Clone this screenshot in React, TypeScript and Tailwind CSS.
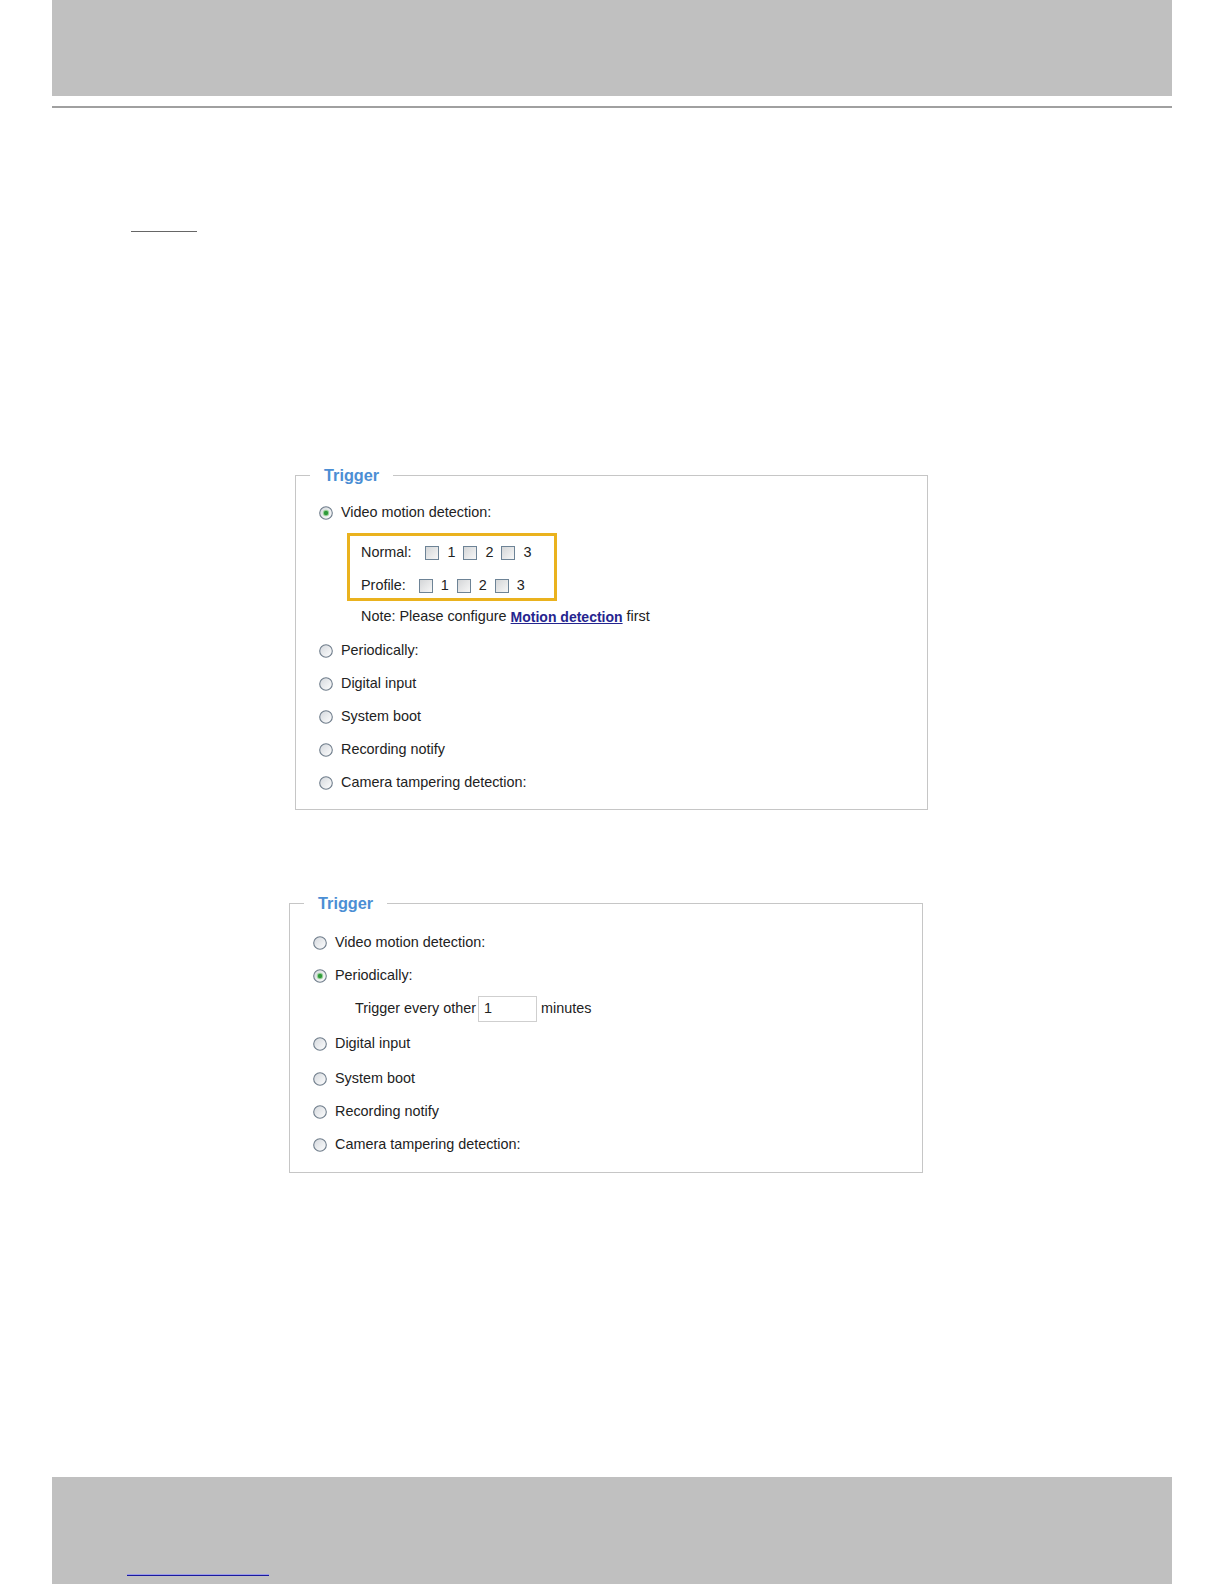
import type { ReactNode } from "react";

const font = { fontFamily: '"Liberation Sans", Arial, sans-serif' };

function Radio({ checked = false }: { checked?: boolean }) {
  return (
    <svg width="14" height="14" viewBox="0 0 14 14" className="shrink-0">
      <defs>
        <linearGradient id={checked ? "rg-on" : "rg-off"} x1="0" y1="0" x2="1" y2="1">
          <stop offset="0" stopColor="#d3d7dc" />
          <stop offset="1" stopColor="#ffffff" />
        </linearGradient>
      </defs>
      <circle
        cx="7"
        cy="7"
        r="6.3"
        fill={`url(#${checked ? "rg-on" : "rg-off"})`}
        stroke="#6f7d8b"
        strokeWidth="1.1"
      />
      {checked && (
        <>
          <circle cx="7" cy="7" r="3.2" fill="#9fd49f" />
          <circle cx="7" cy="7" r="2.2" fill="#2f9a3a" />
        </>
      )}
    </svg>
  );
}

function Checkbox() {
  return (
    <span className="inline-block h-[14px] w-[14px] shrink-0 border border-[#6d8396] bg-gradient-to-br from-[#d4d6d8] to-[#f7f7f7]" />
  );
}

function RadioRow({
  label,
  checked,
  h,
}: {
  label: string;
  checked?: boolean;
  h: string;
}) {
  return (
    <div className={`flex items-center gap-[8px] ${h}`}>
      <Radio checked={checked} />
      <span>{label}</span>
    </div>
  );
}

function Panel({
  className,
  children,
}: {
  className: string;
  children: ReactNode;
}) {
  return (
    <fieldset className={`block border border-[#c6c6c6] ${className}`}>
      <legend className="ml-[14px] px-[14px] text-[16.3px] font-bold leading-[20px] text-[#4b8ed4]">
        Trigger
      </legend>
      {children}
    </fieldset>
  );
}

function CheckGroup({ label, gap }: { label: string; gap: string }) {
  return (
    <div className="flex h-[18px] items-center">
      <span className={gap}>{label}</span>
      {[1, 2, 3].map((n) => (
        <span key={n} className="flex items-center">
          <Checkbox />
          <span className="ml-[8px] mr-[8px]">{n}</span>
        </span>
      ))}
    </div>
  );
}

export default function App() {
  return (
    <div
      className="relative h-[1584px] w-[1224px] overflow-hidden bg-white text-[14.4px] text-[#222]"
      style={font}
    >
      <div className="mx-[52px] h-[96px] bg-[#c0c0c0]" />
      <div className="mx-[52px] mt-[10px] h-[2px] bg-[#a0a0a0]" />

      <div className="ml-[131px] mt-[123px] h-px w-[66px] bg-[#666]" />

      <Panel className="ml-[295px] mt-[233px] w-[633px] pb-[10px]">
        <div className="pl-[23px] pt-[11px]">
          <RadioRow label="Video motion detection:" checked h="h-[33px]" />
          <div className="ml-[28px] mt-[4px] flex h-[68px] w-[210px] flex-col gap-[15px] border-[3px] border-[#eab21e] pl-[11px] pt-[8px]">
            <CheckGroup label="Normal:" gap="mr-[14px]" />
            <CheckGroup label="Profile:" gap="mr-[13px]" />
          </div>
          <div className="ml-[42px] mt-[7px] flex h-[18px] items-center">
            Note: Please configure&nbsp;
            <a href="#" className="text-[14px] font-bold text-[#25258f] underline">
              Motion detection
            </a>
            &nbsp;first
          </div>
          <div className="mt-[8px]">
            <RadioRow label="Periodically:" h="h-[33px]" />
            <RadioRow label="Digital input" h="h-[33px]" />
            <RadioRow label="System boot" h="h-[33px]" />
            <RadioRow label="Recording notify" h="h-[33px]" />
            <RadioRow label="Camera tampering detection:" h="h-[33px]" />
          </div>
        </div>
      </Panel>

      <Panel className="ml-[289px] mt-[83px] w-[634px] pb-[10px]">
        <div className="pl-[23px] pt-[13px]">
          <RadioRow label="Video motion detection:" h="h-[33px]" />
          <RadioRow label="Periodically:" checked h="h-[33px]" />
          <div className="ml-[42px] flex h-[34px] items-center">
            <span>Trigger every other</span>
            <span className="ml-[2px] flex h-[26px] w-[59px] items-center border border-[#cfcfcf] pl-[5px]">
              1
            </span>
            <span className="ml-[4px]">minutes</span>
          </div>
          <RadioRow label="Digital input" h="h-[35.5px]" />
          <RadioRow label="System boot" h="h-[34px]" />
          <RadioRow label="Recording notify" h="h-[33px]" />
          <RadioRow label="Camera tampering detection:" h="h-[33px]" />
        </div>
      </Panel>

      <div className="absolute bottom-0 left-[52px] h-[107px] w-[1120px] bg-[#c0c0c0]">
        <div className="ml-[75px] mt-[97px] h-[2px] w-[142px] border-t border-[#9a9ae8] bg-[#1a1a9c]" />
      </div>
    </div>
  );
}
